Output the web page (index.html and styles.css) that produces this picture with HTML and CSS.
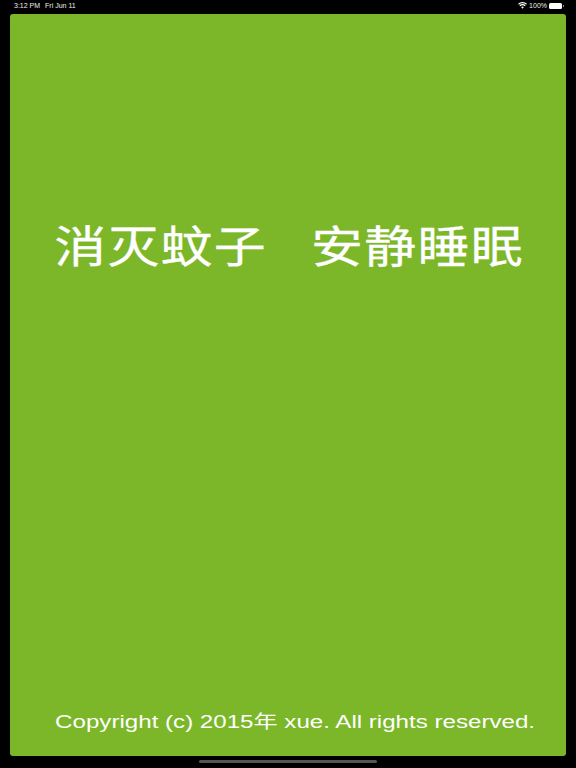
FILE: index.html
```html
<!DOCTYPE html>
<html lang="zh">
<head>
    <meta charset="UTF-8">
    <meta name="viewport" content="width=device-width, initial-scale=1.0">
    <title>消灭蚊子</title>
    <link rel="stylesheet" href="styles.css">
</head>
<body>
    <div class="status-bar">
        <div class="status-left">
            <span>3:12 PM</span>
            <span>Fri Jun 11</span>
        </div>
        <div class="status-right">
            <svg class="wifi" width="9" height="7" viewBox="0 0 10 8">
                <path d="M5 7.6 L3.4 5.8 A2.4 2.4 0 0 1 6.6 5.8 Z" fill="#fff"/>
                <path d="M2.5 4.9 L1.5 3.8 A5 5 0 0 1 8.5 3.8 L7.5 4.9 A3.6 3.6 0 0 0 2.5 4.9 Z" fill="#fff"/>
                <path d="M0.9 3.1 L0 2.1 A7 7 0 0 1 10 2.1 L9.1 3.1 A5.8 5.8 0 0 0 0.9 3.1 Z" fill="#fff"/>
            </svg>
            <span>100%</span>
            <div class="battery"></div>
        </div>
    </div>

    <main class="card">
        <h1 class="slogan">消灭蚊子 安静睡眠</h1>
        <p class="copyright">Copyright (c) 2015年 xue. All rights reserved.</p>
    </main>

    <div class="home-bar"><div class="home-indicator"></div></div>
</body>
</html>
```

FILE: styles.css
```css
* {
    box-sizing: border-box;
}

html, body {
    height: 100%;
}

body {
    margin: 0;
    background-color: #000;
    color: #fff;
    font-family: "Liberation Sans", "Noto Sans CJK SC", sans-serif;
    display: flex;
    flex-direction: column;
    overflow: hidden;
}

.status-bar {
    height: 14px;
    padding: 0 12px 3px 14px;
    display: flex;
    justify-content: space-between;
    align-items: center;
    font-size: 7px;
    color: #eee;
}

.status-left {
    display: flex;
    gap: 5px;
}

.status-right {
    display: flex;
    align-items: center;
    gap: 2px;
}

.battery {
    position: relative;
    width: 13px;
    height: 6px;
    background-color: #fff;
    border-radius: 1.5px;
    margin-right: 2px;
}

.battery::after {
    content: "";
    position: absolute;
    left: 14px;
    top: 2px;
    width: 1px;
    height: 2px;
    background-color: #888;
}

.card {
    flex: 1;
    margin: 0 10px;
    background-color: #7bb729;
    border-radius: 3px;
    display: flex;
    flex-direction: column;
    align-items: center;
    padding-top: 204px;
}

/* the original art is stretched sideways, so the text is too */
.slogan {
    margin: 0 0 0 2px;
    font-size: 44px;
    font-weight: 400;
    line-height: 60px;
    letter-spacing: 1.1px;
    word-spacing: 24px;
    white-space: nowrap;
    transform: scaleX(1.18);
    -webkit-text-stroke: 0.3px #fff;
}

.copyright {
    margin: auto 0 22px 14px;
    font-size: 18px;
    line-height: 24px;
    white-space: nowrap;
    transform: scaleX(1.34);
}

.home-bar {
    height: 12px;
    display: flex;
    justify-content: center;
    padding-top: 4px;
}

.home-indicator {
    width: 178px;
    height: 3px;
    border-radius: 2px;
    background-color: #555;
}
```
